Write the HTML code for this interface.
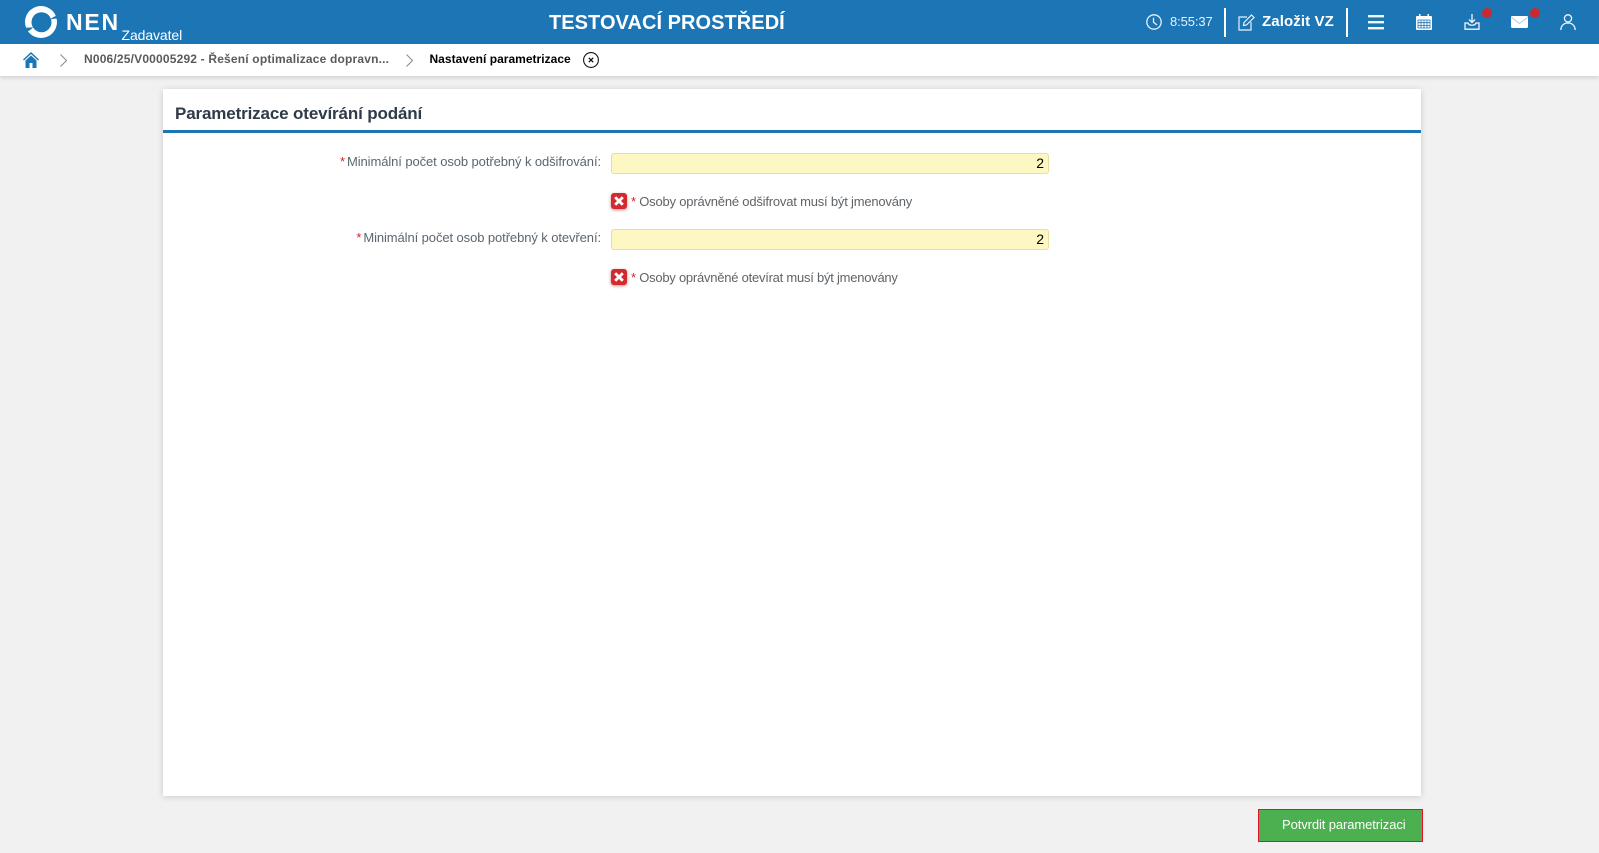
<!DOCTYPE html>
<html lang="cs"><head><meta charset="utf-8"><title>Parametrizace</title>
<style>
html,body{margin:0;padding:0;width:1599px;height:853px;overflow:hidden;background:#f1f1f1;font-family:"Liberation Sans",sans-serif}
.a{position:absolute;white-space:nowrap}
svg{position:absolute;overflow:visible}
.lab{font-size:13px;line-height:16px;color:#5c6670;right:998px;letter-spacing:-.09px}
.lab b{font-weight:400;color:#d2232a;margin-right:2px}
.err b{font-weight:400;color:#d2232a}
.inp{left:611px;width:436px;height:19px;background:#fdf7c3;border:1px solid #e6dfa0;border-radius:3px;font-size:14px;line-height:19px;color:#000;text-align:right}
.inp span{padding-right:4px}
.ex{left:611px;width:16px;height:16px;background:#d32a2e;border-radius:3px;box-shadow:0 1px 3px rgba(120,0,0,.45)}
.err{font-size:13px;line-height:16px;color:#5f6468;left:631px;letter-spacing:-.2px}
</style></head><body>
<div class="a" style="left:0;top:0;width:1599px;height:44px;background:#1c75b4"></div>
<div class="a" style="left:0;top:44px;width:1599px;height:32px;background:#fff;box-shadow:0 2px 4px rgba(0,0,0,.13)"></div>

<svg style="left:25px;top:6px" width="32" height="32" viewBox="0 0 32 32"><circle cx="16" cy="16" r="16" fill="#fff"/><circle cx="16.500" cy="16.200" r="10" fill="#1c75b4"/><path d="M33 9.500L33 13C30 12.300 27.500 12.800 25 14C26.500 11.800 29.500 10 33 9.500Z" fill="#1c75b4"/><path d="M-1 21.500L1 26C4 25 6.500 23.500 8 21C5 21.800 2 21.800 -1 21.500Z" fill="#1c75b4"/></svg>
<div class="a" style="left:66px;top:7.500px;font-size:23px;line-height:28px;font-weight:700;color:#fff;letter-spacing:1.800px">NEN</div>
<div class="a" style="left:121.500px;top:27px;font-size:14px;line-height:16px;color:#fff;letter-spacing:-.1px">Zadavatel</div>
<div class="a" style="left:549px;top:11px;font-size:20px;line-height:24px;font-weight:700;color:#fff;letter-spacing:.05px">TESTOVACÍ PROSTŘEDÍ</div>

<svg style="left:1146px;top:14px" width="16" height="16" viewBox="0 0 16 16" fill="none" stroke="#e8f2f9" stroke-width="1.300"><circle cx="8" cy="8" r="7.200"/><path d="M7.500 3.800V8.200L11 11"/></svg>
<div class="a" style="left:1170px;top:14px;font-size:13px;line-height:16px;color:#e8f2f9;letter-spacing:-.1px">8:55:37</div>
<div class="a" style="left:1224px;top:8px;width:2px;height:29px;background:#fff"></div>
<svg style="left:1238px;top:14px" width="17" height="17" viewBox="0 0 17 17" fill="none" stroke="#e8f2f9" stroke-width="1.200"><path d="M9 3H1V16H13V8"/><path d="M5.500 11.500L6 8.500 13.500 1 16 3.500 8.500 11Z"/></svg>
<div class="a" style="left:1262px;top:13px;font-size:15px;line-height:18px;font-weight:700;color:#fff;letter-spacing:.1px">Založit VZ</div>
<div class="a" style="left:1346px;top:8px;width:2px;height:29px;background:#fff"></div>
<svg style="left:1368px;top:15px" width="16" height="15" viewBox="0 0 16 15" fill="#f1f7fb"><rect y="0" width="16" height="2.400"/><rect y="6" width="16" height="2.400"/><rect y="12" width="16" height="2.400"/></svg>
<svg style="left:1416px;top:14px" width="16" height="16" viewBox="0 0 16 16"><rect x="0" y="2" width="16" height="14" rx="1" fill="#fff"/><rect x="3" y="0" width="1.500" height="3" fill="#fff"/><rect x="11.500" y="0" width="1.500" height="3" fill="#fff"/><path d="M2 6H14V14H2ZM5 6V14M8 6V14M11 6V14M2 8.700H14M2 11.400H14" fill="none" stroke="#1c75b4" stroke-width=".8"/></svg>
<svg style="left:1464px;top:14px" width="16" height="16" viewBox="0 0 16 16" fill="none" stroke="#f1f7fb" stroke-width="1.300"><path d="M8 0V8M5 5.500L8 8.500 11 5.500"/><path d="M4 9H1V15.200H15V9H12C11 12 5 12 4 9Z"/></svg>
<div class="a" style="left:1482px;top:8px;width:10px;height:10px;border-radius:50%;background:#c92a2f"></div>
<svg style="left:1511px;top:16px" width="17" height="12" viewBox="0 0 17 12"><rect width="17" height="12" rx="1.200" fill="#fff"/><path d="M.5 1.500L8.500 7.500 16.500 1.500" fill="none" stroke="#a9cde6" stroke-width="1"/></svg>
<div class="a" style="left:1530px;top:8px;width:10px;height:10px;border-radius:50%;background:#c92a2f"></div>
<svg style="left:1560px;top:14px" width="16" height="16" viewBox="0 0 16 16" fill="none" stroke="#f1f7fb" stroke-width="1.300"><circle cx="8" cy="4.400" r="3.600"/><path d="M.8 16C1 11.500 4 9 8 9S15 11.500 15.200 16"/></svg>

<svg style="left:23px;top:52px" width="16" height="16" viewBox="0 0 16 16"><path d="M8 0L0 7.500 1 8.500 8 2 15 8.500 16 7.500Z" fill="#1c75b4"/><path d="M8 3.500L2.500 8.500V16H6.500V11H9.500V16H13.500V8.500Z" fill="#1c75b4"/></svg>
<svg style="left:60px;top:54px" width="7" height="13" viewBox="0 0 7 13" fill="none" stroke="#888" stroke-width="1"><path d="M.5 .5L6.500 6.500 .5 12.500"/></svg>
<div class="a" style="left:84px;top:52px;font-size:12px;line-height:15px;font-weight:700;color:#5a5a5a;letter-spacing:.18px">N006/25/V00005292 - Řešení optimalizace dopravn...</div>
<svg style="left:405.500px;top:54px" width="7" height="13" viewBox="0 0 7 13" fill="none" stroke="#888" stroke-width="1"><path d="M.5 .5L6.500 6.500 .5 12.500"/></svg>
<div class="a" style="left:429.500px;top:52px;font-size:12px;line-height:15px;font-weight:700;color:#000;letter-spacing:.02px">Nastavení parametrizace</div>
<svg style="left:583px;top:52px" width="16" height="16" viewBox="0 0 16 16" fill="none" stroke="#111" stroke-width="1.100"><circle cx="8" cy="8" r="7.400"/><path d="M5.800 5.800L10.200 10.200M10.200 5.800L5.800 10.200" stroke-width="1.300"/></svg>

<div class="a" style="left:163px;top:89px;width:1258px;height:707px;background:#fff;box-shadow:0 1px 6px rgba(0,0,0,.16)"></div>
<div class="a" style="left:175px;top:103px;font-size:17px;line-height:22px;font-weight:700;color:#2f3b48;letter-spacing:-.14px">Parametrizace otevírání podání</div>
<div class="a" style="left:163px;top:130px;width:1258px;height:3px;background:#1c75b4"></div>

<div class="a lab" style="top:154px"><b>*</b>Minimální počet osob potřebný k odšifrování:</div>
<div class="a inp" style="top:153px"><span>2</span></div>
<div class="a ex" style="top:193px"></div>
<svg style="left:611px;top:193px" width="16" height="16" viewBox="0 0 16 16" fill="none" stroke="#fff" stroke-width="2.800"><path d="M4.200 4.200L11.800 11.800M11.800 4.200L4.200 11.800"/></svg>
<div class="a err" style="top:194px"><b>*</b> Osoby oprávněné odšifrovat musí být jmenovány</div>

<div class="a lab" style="top:230px"><b>*</b>Minimální počet osob potřebný k otevření:</div>
<div class="a inp" style="top:229px"><span>2</span></div>
<div class="a ex" style="top:269px"></div>
<svg style="left:611px;top:269px" width="16" height="16" viewBox="0 0 16 16" fill="none" stroke="#fff" stroke-width="2.800"><path d="M4.200 4.200L11.800 11.800M11.800 4.200L4.200 11.800"/></svg>
<div class="a err" style="top:270px;letter-spacing:-.24px"><b>*</b> Osoby oprávněné otevírat musí být jmenovány</div>

<div class="a" style="left:1258px;top:809px;width:163px;height:31px;background:#4caf50;border:1px solid #e8112d;font-size:13px;line-height:29px;color:#fff"><span style="position:absolute;left:23px;top:0;letter-spacing:-.1px">Potvrdit parametrizaci</span></div>
</body></html>
